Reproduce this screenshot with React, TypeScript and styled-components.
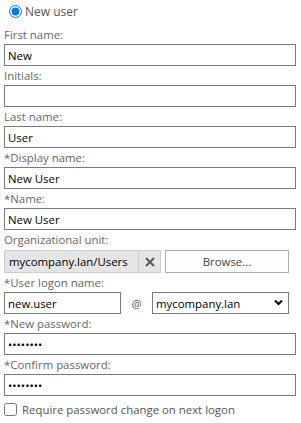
import styled, { createGlobalStyle } from "styled-components";

const GlobalStyle = createGlobalStyle`
    html, body {
        margin: 0;
        padding: 0;
        background: #ffffff;
    }
    body {
        font-family: "Open Sans", "Noto Sans", sans-serif;
        font-size: 11.4px;
        color: #000;
    }
`;

const Form = styled.div`
    width: 301px;
    padding: 0 5px 0 4px;
    box-sizing: border-box;
    display: flex;
    flex-direction: column;
`;

const RadioRow = styled.label`
    display: flex;
    align-items: center;
    height: 25px;
    padding-left: 5px;
    padding-bottom: 2px;
    box-sizing: border-box;
    color: #555;
    font-size: 12px;
    gap: 3px;

    input {
        margin: 0;
        width: 13px;
        height: 13px;
        accent-color: #0075ff;
    }
`;

const Label = styled.div`
    height: 19px;
    line-height: 19px;
    color: #666;
    white-space: nowrap;
`;

const TextInput = styled.input<{ $width?: number }>`
    box-sizing: border-box;
    width: ${(p) => (p.$width ? `${p.$width}px` : "100%")};
    height: 22px;
    margin: 0;
    padding: 0 3px;
    border: 1px solid #7a7a7a;
    border-radius: 0;
    font-family: inherit;
    font-size: 11.4px;
    color: #000;
    background: #fff;
    outline: none;
`;

const Row = styled.div`
    display: flex;
    align-items: center;
    height: 22px;
`;

const OuRow = styled(Row)`
    height: 23px;
    gap: 4px;
    margin-top: 1px;
`;

const OuBox = styled.div`
    box-sizing: border-box;
    width: 157px;
    height: 23px;
    display: flex;
    background: #e5e5e5;
    border: 1px solid #cccccc;
`;

const OuText = styled.div`
    flex: 1;
    padding-left: 4px;
    line-height: 21px;
    color: #000;
`;

const ClearButton = styled.div`
    width: 21px;
    border-left: 1px solid #cccccc;
    display: flex;
    align-items: center;
    justify-content: center;
`;

const BrowseButton = styled.button`
    box-sizing: border-box;
    width: 124px;
    height: 23px;
    margin: 0;
    background: #fdfdfd;
    border: 1px solid #adadad;
    border-radius: 0;
    font-family: inherit;
    font-size: 11.4px;
    color: #444;
    padding: 0;
`;

const At = styled.span`
    width: 31px;
    text-align: center;
    color: #555;
`;

const SelectWrap = styled.div`
    position: relative;
    width: 137px;
    height: 22px;
`;

const Select = styled.select`
    appearance: none;
    box-sizing: border-box;
    width: 100%;
    height: 22px;
    margin: 0;
    padding: 0 3px;
    border: 1px solid #7a7a7a;
    border-radius: 0;
    background: #fff;
    font-family: inherit;
    font-size: 11.4px;
    color: #000;
    outline: none;
`;

const Chevron = styled.svg`
    position: absolute;
    right: 6px;
    top: 7px;
    pointer-events: none;
`;

const CheckRow = styled.label`
    display: flex;
    align-items: center;
    height: 22px;
    gap: 5px;
    color: #555;
    padding-top: 2px;

    input {
        margin: 0;
        width: 13px;
        height: 13px;
    }
`;

function Field({ label, value, type = "text" }: { label: string; value: string; type?: string }) {
    return (
        <>
            <Label>{label}</Label>
            <TextInput type={type} defaultValue={value} />
        </>
    );
}

export default function App() {
    return (
        <>
            <GlobalStyle />
            <Form>
                <RadioRow>
                    <input type="radio" defaultChecked name="mode" />
                    New user
                </RadioRow>
                <Field label="First name:" value="New" />
                <Field label="Initials:" value="" />
                <Field label="Last name:" value="User" />
                <Field label="*Display name:" value="New User" />
                <Field label="*Name:" value="New User" />
                <Label>Organizational unit:</Label>
                <OuRow>
                    <OuBox>
                        <OuText>mycompany.lan/Users</OuText>
                        <ClearButton>
                            <svg width="10" height="10" viewBox="0 0 10 10">
                                <path d="M1 1L9 9M9 1L1 9" stroke="#555" strokeWidth="1.8" />
                            </svg>
                        </ClearButton>
                    </OuBox>
                    <BrowseButton>Browse...</BrowseButton>
                </OuRow>
                <Label>*User logon name:</Label>
                <Row>
                    <TextInput $width={117} defaultValue="new.user" />
                    <At>@</At>
                    <SelectWrap>
                        <Select defaultValue="mycompany.lan">
                            <option>mycompany.lan</option>
                        </Select>
                        <Chevron width="9" height="7" viewBox="0 0 9 7">
                            <path d="M1 1.5L4.5 5L8 1.5" stroke="#000" strokeWidth="2" fill="none" />
                        </Chevron>
                    </SelectWrap>
                </Row>
                <Field label="*New password:" value="12345678" type="password" />
                <Field label="*Confirm password:" value="12345678" type="password" />
                <CheckRow>
                    <input type="checkbox" />
                    Require password change on next logon
                </CheckRow>
            </Form>
        </>
    );
}
